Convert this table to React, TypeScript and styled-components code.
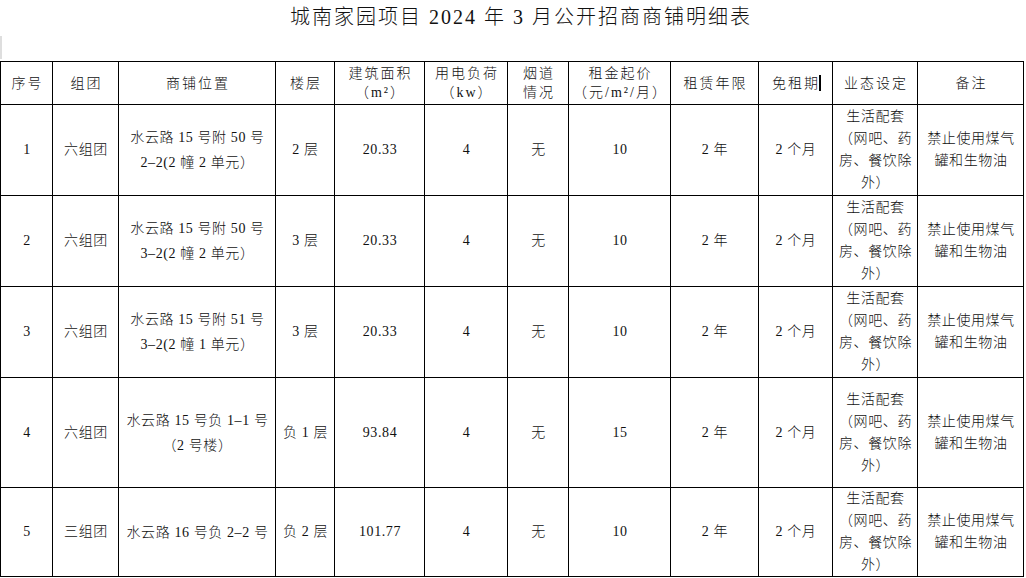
import styled, { createGlobalStyle } from 'styled-components';

const GlobalStyle = createGlobalStyle`
	html, body {
		margin: 0;
		padding: 0;
		background: #fff;
	}
	body {
		font-family: 'Liberation Serif', 'Noto Sans CJK SC', serif;
		color: #111;
	}
`;

const Page = styled.div`
	width: 1026px;
`;

const Title = styled.div`
	height: 35px;
	line-height: 35px;
	padding-left: 16px;
	text-align: center;
	font-size: 20px;
	font-weight: 300;
	letter-spacing: 2px;
	white-space: nowrap;
`;

const Gap = styled.div`
	height: 26px;
	display: flex;
	align-items: flex-start;
`;

const Mark = styled.div`
	width: 2px;
	height: 23px;
	margin-top: 1px;
	background: #dedede;
`;

const Sheet = styled.table`
	width: 1024px;
	border-collapse: collapse;
	table-layout: fixed;
`;

const Row = styled.tr<{ $h: number }>`
	height: ${(p) => p.$h}px;
`;

const HeadCell = styled.th`
	border: 1px solid #000;
	padding: 0 0 0 2px;
	font-size: 14px;
	font-weight: 300;
	letter-spacing: 2px;
	line-height: 19px;
	text-align: center;
	vertical-align: middle;
	white-space: nowrap;
`;

const Cell = styled.td<{ $lh?: number }>`
	border: 1px solid #000;
	padding: 0 0 0 1px;
	font-size: 14px;
	font-weight: 300;
	letter-spacing: 0.6px;
	line-height: ${(p) => p.$lh || 22}px;
	text-align: center;
	vertical-align: middle;
	white-space: nowrap;
`;

const Caret = styled.span`
	display: inline-block;
	width: 2px;
	height: 16px;
	margin-left: -1px;
	background: #000;
	vertical-align: -3px;
`;

const widths = [52, 66, 157, 59, 90, 83, 61, 102, 88, 74, 85, 106];

type Shop = {
	no: string;
	group: string;
	addr: string[];
	floor: string;
	area: string;
	power: string;
	flue: string;
	rent: string;
	term: string;
	free: string;
	h: number;
};

const shops: Shop[] = [
	{ no: '1', group: '六组团', addr: ['水云路 15 号附 50 号', '2–2(2 幢 2 单元）'], floor: '2 层', area: '20.33', power: '4', flue: '无', rent: '10', term: '2 年', free: '2 个月', h: 91 },
	{ no: '2', group: '六组团', addr: ['水云路 15 号附 50 号', '3–2(2 幢 2 单元）'], floor: '3 层', area: '20.33', power: '4', flue: '无', rent: '10', term: '2 年', free: '2 个月', h: 91 },
	{ no: '3', group: '六组团', addr: ['水云路 15 号附 51 号', '3–2(2 幢 1 单元）'], floor: '3 层', area: '20.33', power: '4', flue: '无', rent: '10', term: '2 年', free: '2 个月', h: 91 },
	{ no: '4', group: '六组团', addr: ['水云路 15 号负 1–1 号', '（2 号楼）'], floor: '负 1 层', area: '93.84', power: '4', flue: '无', rent: '15', term: '2 年', free: '2 个月', h: 110 },
	{ no: '5', group: '三组团', addr: ['水云路 16 号负 2–2 号'], floor: '负 2 层', area: '101.77', power: '4', flue: '无', rent: '10', term: '2 年', free: '2 个月', h: 88 },
];

const usage = ['生活配套', '（网吧、药', '房、餐饮除', '外）'];
const note = ['禁止使用煤气', '罐和生物油'];

const Lines = ({ items }: { items: string[] }) => (
	<>
		{items.map((t, i) => (
			<div key={i}>{t}</div>
		))}
	</>
);

const App = () => {
	return (
		<Page>
			<GlobalStyle />
			<Title>城南家园项目 2024 年 3 月公开招商商铺明细表</Title>
			<Gap>
				<Mark />
			</Gap>
			<Sheet>
				<colgroup>
					{widths.map((w, i) => (
						<col key={i} style={{ width: w }} />
					))}
				</colgroup>
				<thead>
					<Row $h={43}>
						<HeadCell>序号</HeadCell>
						<HeadCell>组团</HeadCell>
						<HeadCell>商铺位置</HeadCell>
						<HeadCell>楼层</HeadCell>
						<HeadCell>
							建筑面积
							<br />（m²）
						</HeadCell>
						<HeadCell>
							用电负荷
							<br />（kw）
						</HeadCell>
						<HeadCell>
							烟道
							<br />
							情况
						</HeadCell>
						<HeadCell>
							租金起价
							<br />（元/m²/月）
						</HeadCell>
						<HeadCell>租赁年限</HeadCell>
						<HeadCell>
							免租期
							<Caret />
						</HeadCell>
						<HeadCell>业态设定</HeadCell>
						<HeadCell>备注</HeadCell>
					</Row>
				</thead>
				<tbody>
					{shops.map((s) => (
						<Row key={s.no} $h={s.h}>
							<Cell>{s.no}</Cell>
							<Cell>{s.group}</Cell>
							<Cell $lh={25}>
								<Lines items={s.addr} />
							</Cell>
							<Cell>{s.floor}</Cell>
							<Cell>{s.area}</Cell>
							<Cell>{s.power}</Cell>
							<Cell>{s.flue}</Cell>
							<Cell>{s.rent}</Cell>
							<Cell>{s.term}</Cell>
							<Cell>{s.free}</Cell>
							<Cell $lh={22}>
								<Lines items={usage} />
							</Cell>
							<Cell $lh={22}>
								<Lines items={note} />
							</Cell>
						</Row>
					))}
				</tbody>
			</Sheet>
		</Page>
	);
};

export default App;
